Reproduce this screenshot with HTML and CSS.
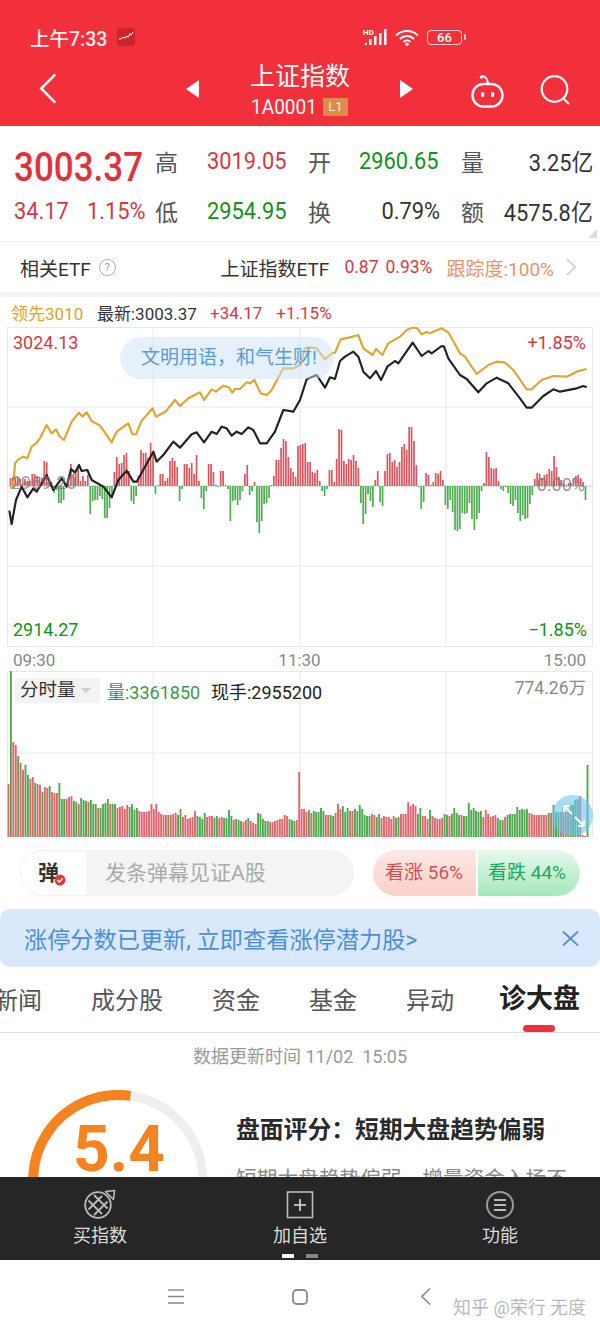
FILE: index.html
```html
<!DOCTYPE html>
<html lang="zh-CN">
<head>
<meta charset="utf-8">
<title>上证指数</title>
<link rel="stylesheet" href="styles.css">
</head>
<body>
<div class="screen">
  <header class="app-head">
    <div class="status">
      <span class="clock">上午7:33</span>
      <svg class="app-dot" viewBox="0 0 18 18"><rect width="18" height="18" rx="4" fill="#c9252f"/><path d="M2 11l2 0 2-2 2 1 2-2 1 1 2-3 1 1 2-3" fill="none" stroke="#fff" stroke-width="1.1" stroke-dasharray="2 .6"/></svg>
      <span class="status-fill"></span>
      <svg class="sig" viewBox="0 0 24 18"><text x="0" y="6.500" class="hd">HD</text><path d="M1 17l3-3v3zM6 11h2.500v6H6zM11 8h2.500v9H11zM16 5h2.500v12H16zM21 1h2.500v16H21z" fill="#fff"/></svg>
      <svg class="wifi" viewBox="0 0 24 17"><path d="M1 6.500c6-6 16-6 22 0M5 10c4-4 10-4 14 0M8.500 13c2-2 5-2 7 0" fill="none" stroke="#fff" stroke-width="1.800"/><circle cx="12" cy="15.300" r="1.700" fill="#fff"/></svg>
      <span class="batt"><span class="batt-num">66</span></span>
    </div>
    <nav class="title-bar">
      <svg class="back" viewBox="0 0 18 32"><path d="M16.500 1.500L2 16l14.500 14.500" fill="none" stroke="#fff" stroke-width="2.600"/></svg>
      <svg class="tri" viewBox="0 0 13 18"><path d="M13 0v18L0 9z" fill="#fff"/></svg>
      <div class="title-mid">
        <div class="index-name">上证指数</div>
        <div class="index-code"><span>1A0001</span><b class="level">L1</b></div>
      </div>
      <svg class="tri" viewBox="0 0 13 18"><path d="M0 0v18l13-9z" fill="#fff"/></svg>
      <svg class="robot" viewBox="0 0 33 33"><path d="M11 1c3 0 5 2 6 7" fill="none" stroke="#fff" stroke-width="2"/><circle cx="10.500" cy="2" r="1.800" fill="#fff"/><rect x="1.500" y="9" width="30" height="22.500" rx="11" fill="none" stroke="#fff" stroke-width="2.400"/><rect x="10" y="17" width="3.200" height="5" rx="1.500" fill="#fff"/><rect x="20" y="17" width="3.200" height="5" rx="1.500" fill="#fff"/></svg>
      <svg class="search" viewBox="0 0 30 30"><circle cx="14.500" cy="14" r="12.800" fill="none" stroke="#fff" stroke-width="2.200"/><path d="M24 24l5 5" stroke="#fff" stroke-width="2.200"/></svg>
    </nav>
  </header>

  <main class="content">
    <section class="stats">
      <div class="price"><span class="price-num">3003.37</span></div>
      <div class="lab">高</div>
      <div class="val up"><span class="nar">3019.05</span></div>
      <div class="lab lab-b">开</div>
      <div class="val down"><span class="nar">2960.65</span></div>
      <div class="lab lab-c">量</div>
      <div class="val-end"><span class="nar-r">3.25亿</span></div>
      <div class="change up"><span class="nar">34.17</span><span class="nar">1.15%</span></div>
      <div class="lab">低</div>
      <div class="val down"><span class="nar">2954.95</span></div>
      <div class="lab lab-b">换</div>
      <div class="val-end val-plain"><span class="nar-r">0.79%</span></div>
      <div class="lab lab-c">额</div>
      <div class="val-end"><span class="nar-r">4575.8亿</span></div>
      <i class="corner"></i>
    </section>

    <section class="etf">
      <span class="etf-label">相关ETF</span>
      <span class="help">?</span>
      <span class="etf-fill"></span>
      <span class="etf-name">上证指数ETF</span>
      <span class="etf-num">0.87</span>
      <span class="etf-num">0.93%</span>
      <span class="etf-track">跟踪度:100%</span>
      <svg class="etf-arrow" viewBox="0 0 10 18"><path d="M1 1l8 8-8 8" fill="none" stroke="#ccc" stroke-width="1.600"/></svg>
    </section>
    <div class="band"></div>

    <section class="legend">
      <span class="lead">领先3010</span>
      <span class="latest">最新:3003.37</span>
      <span class="lg-up">+34.17</span>
      <span class="lg-up">+1.15%</span>
    </section>

    <section class="price-chart">
      <svg class="plot" id="price-plot" viewBox="0 0 600 320" width="600" height="320">
        <g class="grid">
          <rect x="7.500" y="0.500" width="585" height="319"/>
          <path d="M7 80h586M7 239h586M153 0v320M300 0v320M446 0v320"/>
          <path class="mid" d="M7 159h586"/>
        </g>
        <g id="flow-bars"></g>
        <g transform="translate(0 -27) scale(.33333)" class="lines">
          <polyline class="line-lead" points="30,565 40,560 45,490 55,478 70,470 82,475 95,440 108,430 120,415 140,375 155,400 168,388 178,408 192,420 215,365 237,338 247,350 260,337 275,363 300,377 320,405 335,427 350,395 385,370 397,402 408,403 425,362 458,325 468,350 497,335 525,300 540,318 565,295 600,277 612,300 635,268 648,275 670,257 687,262 697,278 705,267 720,267 740,247 750,250 763,240 782,280 800,285 815,270 850,205 880,205 900,195 915,145 930,142 950,145 975,178 995,160 1005,158 1022,118 1050,112 1075,105 1090,145 1118,165 1128,147 1147,165 1165,130 1200,110 1220,90 1240,82 1252,85 1265,103 1280,96 1290,100 1325,85 1345,97 1380,160 1395,170 1430,222 1465,195 1490,185 1515,188 1540,210 1580,268 1595,268 1625,240 1660,228 1700,230 1730,215 1760,207"/>
          <polyline class="line-index" points="28,632 35,672 48,600 65,560 82,592 100,565 110,575 140,525 160,570 185,535 200,560 213,507 225,518 237,495 245,513 262,510 275,540 310,560 335,592 355,540 380,512 400,545 410,545 460,455 470,485 490,465 520,425 540,443 575,403 590,397 612,427 635,395 650,402 665,380 680,385 695,407 710,395 725,402 745,382 760,390 780,430 800,430 825,395 850,330 880,335 900,300 920,238 950,225 975,263 990,232 1005,237 1020,183 1035,170 1060,155 1075,170 1090,215 1110,235 1128,213 1143,240 1162,200 1185,183 1195,190 1238,128 1265,168 1285,153 1295,160 1325,138 1332,140 1345,175 1380,225 1400,237 1435,277 1460,250 1490,233 1525,250 1560,295 1580,323 1595,323 1630,288 1660,268 1680,275 1730,265 1750,258 1760,262"/>
        </g>
      </svg>
      <span class="tag tag-tl">3024.13</span>
      <span class="tag tag-tr">+1.85%</span>
      <span class="tag tag-ml">2969.20</span>
      <span class="tag tag-mr">0.00%</span>
      <span class="tag tag-bl">2914.27</span>
      <span class="tag tag-br">−1.85%</span>
      <div class="bubble">文明用语&#xFF0C;和气生财!</div>
    </section>

    <section class="axis"><span>09:30</span><span>11:30</span><span>15:00</span></section>

    <section class="volume-chart">
      <svg class="plot" id="vol-plot" viewBox="0 0 600 166" width="600" height="166">
        <g class="grid">
          <rect x="7.500" y="0.500" width="585" height="166"/>
          <path d="M7 82h586M153 0v166M300 0v166M446 0v166"/>
        </g>
        <g id="vol-bars"></g>
      </svg>
      <div class="vol-head">
        <span class="chip">分时量<i class="chip-arrow"></i></span>
        <span class="vol-num">量:3361850</span>
        <span class="vol-now">现手:2955200</span>
      </div>
      <span class="vol-max">774.26万</span>
      <svg class="expand" viewBox="0 0 41 43"><circle cx="20.500" cy="21.500" r="20.500" fill="#6dc3f3" fill-opacity=".6"/><path d="M20 20L12 12M12 12v6M12 12h6M23 23l9 9M32 32v-6M32 32h-6" fill="none" stroke="#fff" stroke-width="1.800"/></svg>
    </section>

    <section class="comment-row">
      <div class="danmu">
        <span class="danmu-mark">弹<svg class="danmu-check" viewBox="0 0 12 12"><circle cx="6" cy="6" r="5.500" fill="#e03b3b"/><path d="M3.300 6l2 2 3.500-3.500" fill="none" stroke="#fff" stroke-width="1.300"/></svg></span>
        <span class="danmu-input">发条弹幕见证A股</span>
      </div>
      <div class="vote">
        <span class="vote-up">看涨 56%</span>
        <span class="vote-down">看跌 44%</span>
      </div>
    </section>

    <section class="notice">
      <span class="notice-text">涨停分数已更新, 立即查看涨停潜力股&gt;</span>
      <svg class="notice-close" viewBox="0 0 17 15"><path d="M1 .5l15 14M16 .5l-15 14" fill="none" stroke="#4a8fd8" stroke-width="1.800"/></svg>
    </section>

    <nav class="tabs">
      <span class="tab">新闻</span>
      <span class="tab">成分股</span>
      <span class="tab">资金</span>
      <span class="tab">基金</span>
      <span class="tab">异动</span>
      <span class="tab tab-on">诊大盘</span>
    </nav>

    <div class="updated">数据更新时间 11/02&nbsp;&nbsp;15:05</div>

    <section class="score">
      <div class="gauge">
        <svg viewBox="0 0 180 180" width="180" height="180"><circle cx="90" cy="90" r="85" fill="none" stroke="#eee" stroke-width="9"/><path d="M18 135A85 85 0 0 1 102.500 5.900" fill="none" stroke="#f5831f" stroke-width="10"/></svg>
        <span class="gauge-num">5.4</span>
      </div>
      <div class="score-text">
        <h2>盘面评分&#xFF1A;短期大盘趋势偏弱</h2>
        <p>短期大盘趋势偏弱&#xFF0C;增量资金入场不</p>
      </div>
    </section>
  </main>

  <footer class="toolbar">
    <div class="tool">
      <svg viewBox="0 0 32 32"><circle cx="14" cy="16" r="12.800" fill="none" stroke="#bbb" stroke-width="1.800"/><path d="M4.500 11.500L18 25M10 6L23.500 19.500M4.500 20.500L18 7M10 26L23.500 12.500" fill="none" stroke="#bbb" stroke-width="1.800"/><path d="M21.500 2.500L30.500 1.500 29.500 10.500z" fill="#262626" stroke="#bbb" stroke-width="1.600" stroke-linejoin="round"/></svg>
      <span>买指数</span>
    </div>
    <div class="tool">
      <svg viewBox="0 0 32 32"><rect x="3.500" y="3" width="25" height="25.500" fill="none" stroke="#bbb" stroke-width="1.600"/><path d="M16 10v12M10 16h12" stroke="#ddd" stroke-width="1.600"/></svg>
      <span>加自选</span>
    </div>
    <div class="tool">
      <svg viewBox="0 0 32 32"><circle cx="16" cy="16" r="13" fill="none" stroke="#999" stroke-width="2"/><path d="M10 11h12M10 16h12M10 21h12" stroke="#bbb" stroke-width="1.800"/></svg>
      <span>功能</span>
    </div>
    <div class="pager"><i class="pg pg-on"></i><i class="pg"></i></div>
  </footer>

  <div class="sysnav">
    <svg class="sys-menu" viewBox="0 0 16 15"><path d="M0 1h16M0 7.500h16M0 14h16" stroke="#8a8a8a" stroke-width="1.600"/></svg>
    <svg class="sys-home" viewBox="0 0 16 16"><rect x="1" y="1" width="14" height="14" rx="3.500" fill="none" stroke="#8a8a8a" stroke-width="1.800"/></svg>
    <svg class="sys-back" viewBox="0 0 10 17"><path d="M9 .5L1 8.500l8 8" fill="none" stroke="#8a8a8a" stroke-width="1.600"/></svg>
    <span class="watermark">知乎 @荣行 无度</span>
  </div>
</div>
<script src="app.js"></script>
</body>
</html>
```

FILE: styles.css
```css
* { box-sizing: border-box; }
html, body { margin: 0; padding: 0; }
body {
  width: 600px;
  height: 1333px;
  overflow: hidden;
  background: #fff;
  font-family: Roboto, "Noto Sans CJK SC", sans-serif;
}
.screen {
  width: 600px;
  height: 1333px;
  display: flex;
  flex-direction: column;
  overflow: hidden;
}
svg { display: block; }

/* header */
.app-head { height: 126px; background: #f2303b; color: #fff; flex: none; }
.status { height: 56px; padding: 18px 0 0 30px; display: flex; align-items: center; }
.clock { font-size: 19.500px; font-weight: 500; width: 87px; white-space: nowrap; color: #fdeeee; }
.app-dot { width: 18px; height: 18px; }
.status-fill { flex: 1; }
.sig { width: 24px; height: 18px; margin-right: 8px; }
.hd { font: 700 8px Roboto, sans-serif; fill: #fff; }
.wifi { width: 24px; height: 17px; margin-right: 8px; }
.batt {
  width: 35px; height: 15px; margin-right: 138px;
  border: 1.500px solid #fbd8d8; border-radius: 4px;
  display: flex; align-items: center; justify-content: center;
  position: relative;
}
.batt::after {
  content: ""; position: absolute; right: -5px; top: 3px;
  width: 2px; height: 6px; background: #fbd8d8; border-radius: 1px;
}
.batt-num { font-size: 13px; font-weight: 500; line-height: 1; }
.title-bar { height: 70px; position: relative; display: flex; align-items: center; padding-left: 39px; }
.back { width: 18px; height: 31px; margin: -6px 129px 0 0; }
.tri { width: 13px; height: 18px; margin-top: -5px; }
.title-mid { width: 201px; padding-left: 51px; margin-top: -2px; }
.index-name { font-size: 25px; line-height: 30px; white-space: nowrap; }
.index-code { display: flex; align-items: center; height: 22px; margin-top: 4px; padding-left: 1px; font-size: 20.500px; }
.index-code span { display: inline-block; width: 72px; transform: scaleX(.93); transform-origin: left; white-space: nowrap; }
.level {
  width: 25px; height: 18px; background: #d98f4a; color: #fbeadb;
  font: 400 13px/18px Roboto, sans-serif; text-align: center;
}
.robot { width: 33px; height: 33px; margin: 0 0 0 58px; }
.search { width: 30px; height: 30px; margin: -2px 0 0 36px; }

/* main */
.content { flex: 1; min-height: 0; overflow: hidden; }

.stats {
  height: 116px;
  padding: 10px 8px 0 14px;
  border-bottom: 1px solid #eee;
  display: grid;
  grid-template-columns: 140px 53px 81px 71px 81px 45px 108px;
  grid-template-rows: 50px 50px;
  align-items: center;
  position: relative;
  white-space: nowrap;
}
.price { margin-top: 13px; }
.price-num {
  display: inline-block; font-size: 40px; font-weight: 500; color: #e0323c; line-height: 40px;
  transform: scaleX(.875); transform-origin: left;
}
.lab { font-size: 23px; color: #555; padding-left: 1px; }
.lab-b { padding-left: 20px; }
.lab-c { padding-left: 21px; }
.val { font-size: 23.500px; color: #333; }
.nar, .nar-r { display: inline-block; transform: scaleX(.93); transform-origin: left; }
.nar-r { transform-origin: right; }
.val-end { text-align: right; font-size: 23.500px; color: #333; }
.val-plain { justify-self: end; }
.up { color: #d23a44; }
.down { color: #149020; }
.change { display: flex; justify-content: space-between; width: 133px; font-size: 23.500px; }
.change .nar { width: 60px; }
.change .nar:first-child { width: 71px; }
.corner {
  position: absolute; right: 3px; bottom: 3px;
  border-left: 9px solid transparent; border-bottom: 9px solid #ddd;
}

.etf { height: 50px; display: flex; align-items: center; padding-left: 20px; white-space: nowrap; }
.etf-label { font-size: 19px; color: #333; }
.help {
  width: 17px; height: 17px; margin-left: 8px; border: 1px solid #aaa; border-radius: 50%;
  font-size: 11px; line-height: 15px; text-align: center; color: #999;
}
.etf-fill { flex: 1; }
.etf-name { font-size: 19px; color: #333; margin-right: 15px; }
.etf-num { font-size: 17.500px; color: #d23a44; margin-right: 7px; }
.etf-track { font-size: 19px; color: #e8936a; margin: 0 12px 0 7px; }
.etf-arrow { width: 10px; height: 18px; margin-right: 24px; }
.band { height: 5px; background: #f3f3f3; }

.legend { height: 30px; display: flex; align-items: center; padding: 1px 0 0 11px; font-size: 17px; white-space: nowrap; }
.lead { color: #d9a428; width: 86px; }
.latest { color: #333; width: 113px; }
.lg-up { color: #d23a44; margin-right: 14px; }

/* charts */
.price-chart { position: relative; height: 320px; }
.volume-chart { position: relative; height: 166px; }
.plot { position: absolute; left: 0; top: 0; }
.grid rect { fill: none; stroke: #e8e8e8; }
.grid path { fill: none; stroke: #e8e8e8; }
.grid .mid { stroke: #ccc; }
.lines polyline { fill: none; stroke-width: 6.500; stroke-linejoin: round; }
.line-lead { stroke: #dca632; }
.line-index { stroke: #222; }
.tag { position: absolute; font-size: 18px; line-height: 22px; white-space: nowrap; }
.tag-tl { left: 13px; top: 5px; color: #d23a44; }
.tag-tr { right: 14px; top: 5px; color: #d23a44; }
.tag-ml { left: 11px; top: 145px; color: rgba(120,120,120,.75); }
.tag-mr { right: 15px; top: 147px; color: rgba(120,120,120,.8); }
.tag-bl { left: 13px; top: 292px; color: #149020; }
.tag-br { right: 13px; top: 292px; color: #149020; }
.bubble {
  position: absolute; left: 120px; top: 10px; width: 214px; height: 42px;
  border-radius: 21px; background: rgba(205,225,248,.5);
  color: #5a9bd8; font-size: 19px; line-height: 42px; padding-left: 21px; white-space: nowrap;
}
.axis {
  height: 24px; display: flex; justify-content: space-between; align-items: center;
  padding: 2px 14px 0 13px; font-size: 17px; color: #888;
}
.vol-head {
  position: absolute; left: 15px; top: 7px; height: 25px;
  display: flex; align-items: center; white-space: nowrap; font-size: 18px;
}
.chip {
  width: 85px; height: 25px; padding-left: 5px; background: #f3f3f3; border-radius: 3px;
  font-size: 18.500px; line-height: 25px; color: #333; display: flex; align-items: center;
}
.chip-arrow {
  margin-left: 5px; border-left: 5px solid transparent; border-right: 5px solid transparent;
  border-top: 5px solid #ccc;
}
.vol-num { color: #3a9a4a; margin-left: 7px; width: 104px; }
.vol-now { color: #222; }
.vol-max { position: absolute; right: 14px; top: 6px; font-size: 17.500px; line-height: 22px; color: #888; }
.expand { position: absolute; left: 552px; top: 123px; width: 41px; height: 43px; }

/* comment box and vote */
.comment-row { display: flex; align-items: stretch; margin-top: 13px; height: 46px; padding: 0 20px; }
.danmu {
  width: 334px; display: flex; border-radius: 23px; overflow: hidden;
  border: 1px solid #f3f3f3; background: #f4f4f4;
}
.danmu-mark {
  width: 65px; background: #fff; position: relative;
  font-size: 21px; font-weight: 700; color: #333; line-height: 44px; padding-left: 17px;
}
.danmu-check { position: absolute; left: 33px; top: 23px; width: 12px; height: 12px; }
.danmu-input { padding-left: 19px; font-size: 21px; line-height: 44px; color: #aaa; white-space: nowrap; }
.vote { width: 207px; margin-left: 19px; display: flex; border-radius: 23px; overflow: hidden; font-size: 19px; white-space: nowrap; }
.vote-up {
  width: 103px; padding-left: 12px; line-height: 46px; color: #d0504f;
  background: linear-gradient(180deg, #fde8e4, #fbcfca);
}
.vote-down {
  flex: 1; padding-left: 10px; line-height: 46px; color: #1fa85a;
  background: linear-gradient(180deg, #e6f9ec, #a5e8bd);
  border-left: 2px solid #fff;
}
.notice {
  height: 58px; margin-top: 13px; border-radius: 10px; background: #d9e8fb;
  display: flex; align-items: center; justify-content: space-between; padding: 0 21px 0 24px;
}
.notice-text { font-size: 23.200px; color: #4a8fd8; white-space: nowrap; }
.notice-close { width: 17px; height: 15px; }
.tabs {
  height: 66px; display: flex; align-items: center; gap: 49px;
  padding: 0 0 2px 0; border-bottom: 1px solid #ddd;
  white-space: nowrap; position: relative;
}
.tab { font-size: 24px; color: #555; position: relative; }
.tab:first-child { margin-left: -6px; }
.tab-on { font-size: 27px; font-weight: 700; color: #222; margin-left: -4px; height: 40px; line-height: 40px; }
.tab-on::after {
  content: ""; position: absolute; left: 24px; bottom: -13px; width: 32px; height: 7px;
  background: #f0303a; border-radius: 4px;
}
.updated { height: 48px; text-align: center; font-size: 18px; line-height: 48px; color: #999; }
.score { display: flex; padding: 9px 0 0 28px; }
.gauge { position: relative; width: 180px; height: 180px; flex: none; }
.gauge-num {
  position: absolute; left: 45px; top: 22px;
  font: 700 64px/76px Roboto, sans-serif; color: #f5831f;
}
.score-text { margin-left: 28px; white-space: nowrap; }
.score-text h2 { margin: 23px 0 0; font-size: 23.800px; line-height: 34px; color: #2a2a2a; font-weight: 700; }
.score-text p { margin: 17px 0 0; font-size: 20.700px; line-height: 30px; color: #888; }

/* bottom bars */
.toolbar {
  height: 83px; flex: none; background: #262626; position: relative;
  display: grid; grid-template-columns: 200px 200px 200px; justify-items: center; padding-top: 12px;
}
.tool { display: flex; flex-direction: column; align-items: center; }
.tool svg { width: 32px; height: 32px; }
.tool span { font-size: 18px; line-height: 26px; margin-top: 2px; color: #ddd; }
.pager { position: absolute; left: 282px; top: 77px; display: flex; gap: 12px; }
.pg { width: 12px; height: 4px; background: #888; }
.pg-on { background: #fff; }
.sysnav { height: 73px; flex: none; background: #fff; position: relative; display: flex; padding: 29px 0 0 168px; }
.sys-menu { width: 16px; height: 15px; margin-right: 108px; }
.sys-home { width: 16px; height: 16px; margin-right: 113px; }
.sys-back { width: 10px; height: 17px; margin-top: -1px; }
.watermark {
  position: absolute; left: 453px; top: 36px; font-size: 18px; line-height: 24px;
  color: rgba(160,160,160,.75); white-space: nowrap;
}
```

FILE: app.js
```js
// Draws the fund-flow and minute-volume histograms from their series.
// Positive values are rising bars (red), negative are falling bars (green).
var flow = [8,9,8,9,7,3,7,5,5,12,12,10,9,8,25,24,6,4,-7,-4,-17,-17,-14,-1,3,22,12,12,20,5,10,5,11,-28,-15,-14,-14,-10,-13,-32,-32,-22,-12,14,29,22,23,31,33,15,-15,-18,-10,10,36,33,33,28,43,31,-8,1,12,12,5,8,25,28,25,19,-15,-3,22,22,18,23,12,31,5,-12,-23,-5,22,22,14,1,-1,15,15,1,-3,-35,-15,-14,-19,-14,-5,12,21,-9,-5,4,-36,-47,-35,-18,-17,-12,1,10,26,26,38,47,45,29,18,14,9,40,
  41,42,43,24,24,14,13,16,5,-5,-10,-3,16,16,4,27,57,56,25,22,27,26,31,25,18,-17,-38,-28,-8,-15,-21,6,15,-16,-20,15,32,33,24,26,19,24,39,42,36,59,59,45,21,-1,-23,-16,13,11,1,4,13,12,15,6,-19,-23,-14,-26,-44,-45,-43,-27,-28,-27,-17,-33,-44,-33,-27,-5,3,34,29,18,17,18,5,-3,-5,-1,-7,-18,-20,-14,-27,-35,-29,-33,-32,-18,-9,7,13,12,8,11,12,17,15,30,19,9,6,3,1,3,3,8,10,11,8,4,-14];

var vol = [53,-166,95,92,-81,74,67,-72,-62,58,60,-54,53,52,-45,50,49,-51,45,44,44,-54,-38,-38,38,40,41,-36,-35,33,-39,-37,-36,35,-37,-33,-33,29,-29,-33,-34,-38,33,-33,-33,29,30,31,28,32,-30,-33,-27,-29,26,25,25,25,26,33,28,33,25,23,22,22,-22,22,23,24,-22,-28,20,22,18,19,20,26,-21,-20,-18,-24,20,21,21,-19,-21,19,20,-19,-19,-27,-21,17,-18,-17,-16,15,17,-19,16,14,13,-24,-23,-18,-16,-16,15,15,16,17,18,18,22,21,-18,-17,-16,17,65,
  28,28,25,-27,24,-26,-25,-25,-29,-26,22,22,-22,-21,24,33,28,-31,-25,-29,26,26,-28,-26,-32,-28,-22,-21,-21,23,22,-20,-23,19,21,20,20,18,21,-19,-20,23,23,23,35,31,33,31,-23,-29,21,21,18,-27,21,19,18,18,19,-23,-22,21,-23,-29,-24,-22,22,-21,-21,-34,-27,-29,-26,-25,-26,20,27,23,20,21,22,-19,-17,-17,20,-22,-23,-23,-23,-30,-27,-28,-27,-28,24,23,22,22,22,22,22,22,-24,24,-32,-25,-25,25,-30,25,27,-32,-32,-37,-38,41,2,1,-72];

var SVG_NS = "http://www.w3.org/2000/svg";

// Diverging bars hang from the baseline when negative; volume bars always rise.
function drawBars(groupId, series, opts) {
  var group = document.getElementById(groupId);
  var pitch = (opts.x1 - opts.x0) / (series.length - 1);
  series.forEach(function (value, i) {
    var bar = document.createElementNS(SVG_NS, "rect");
    var height = Math.abs(value);
    var rises = value > 0 || opts.alwaysUp;
    bar.setAttribute("x", (opts.x0 + i * pitch - opts.width / 2).toFixed(2));
    bar.setAttribute("y", rises ? opts.baseline - height : opts.baseline);
    bar.setAttribute("width", opts.width);
    bar.setAttribute("height", height);
    bar.setAttribute("fill", value > 0 ? opts.up : opts.down);
    group.appendChild(bar);
  });
}

drawBars("flow-bars", flow, { x0: 10.5, x1: 585.5, baseline: 159, width: 1.7, up: "#d9565f", down: "#4fad4f" });
drawBars("vol-bars", vol, { x0: 8.5, x1: 587.5, baseline: 166, width: 1.9, up: "#e0666d", down: "#4fa84f", alwaysUp: true });
```
